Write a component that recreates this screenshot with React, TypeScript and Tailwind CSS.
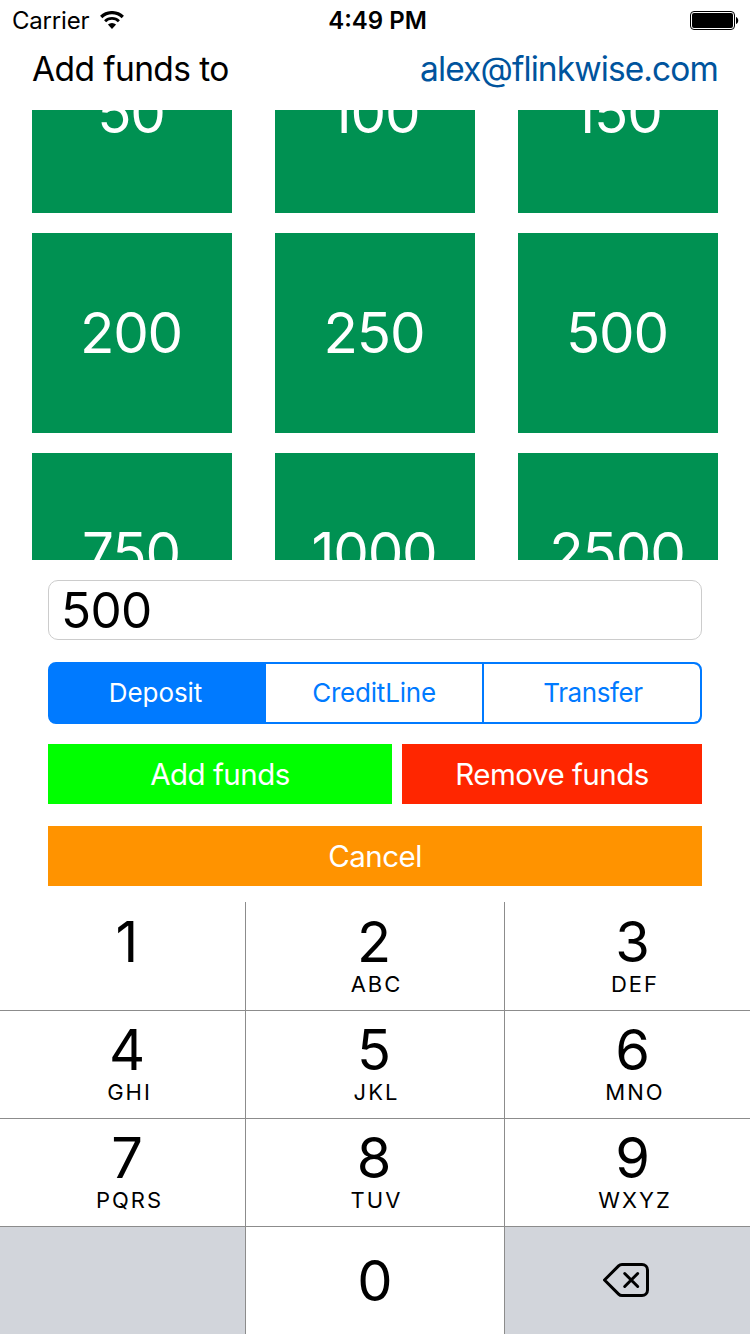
import React from "react";
import clsx from "clsx";

interface KeyProps {
  digit: string;
  letters?: string;
  className?: string;
}

const tileRows = [
  ["50", "100", "150"],
  ["200", "250", "500"],
  ["750", "1000", "2500"],
];

// Outer columns sit slightly right of center
const keys: KeyProps[] = [
  { digit: "1", className: "pt-[11px] pl-[11px]" },
  { digit: "2", letters: "ABC", className: "pt-[11px]" },
  { digit: "3", letters: "DEF", className: "pt-[11px] pl-[12px]" },
  { digit: "4", letters: "GHI", className: "pt-[10px] pl-[11px]" },
  { digit: "5", letters: "JKL", className: "pt-[10px]" },
  { digit: "6", letters: "MNO", className: "pt-[10px] pl-[12px]" },
  { digit: "7", letters: "PQRS", className: "pt-[10px] pl-[11px]" },
  { digit: "8", letters: "TUV", className: "pt-[10px]" },
  { digit: "9", letters: "WXYZ", className: "pt-[10px] pl-[12px]" },
];

// Single key of the number pad
const Key: React.FC<KeyProps> = ({ digit, letters, className }) => {
  return (
    <button className={clsx("bg-white flex flex-col items-center", className)}>
      <span className="text-[56px] leading-[58px] pr-[2px]">{digit}</span>
      {letters && (
        <span className="text-[22px] leading-[22px] mt-[2px] tracking-[2px] pl-[3px]">
          {letters}
        </span>
      )}
    </button>
  );
};

const StatusBar: React.FC = () => {
  return (
    <div className="h-10 grid grid-cols-3 items-center pl-3 pr-[11px] text-[24px] leading-none">
      <div className="flex items-center gap-[11px]">
        <span className="tracking-[-0.2px] pt-px">Carrier</span>
        <svg width="24" height="18" viewBox="0 0 24 18" fill="none">
          <path d="M1.2 6a15.4 15.4 0 0 1 21.6 0" stroke="black" strokeWidth="3.2" />
          <path d="M5.1 10.2a9.9 9.9 0 0 1 13.8 0" stroke="black" strokeWidth="2.9" />
          <path d="M12 18l-4.1-4.4a6 6 0 0 1 8.2 0z" fill="black" />
        </svg>
      </div>
      <span className="text-center font-semibold pl-[4px] pt-px">4:49 PM</span>
      <svg className="justify-self-end" width="49" height="19" viewBox="0 0 49 19">
        <rect x="0.5" y="0.5" width="44" height="18" rx="3.5" fill="none" stroke="black" />
        <rect x="2" y="2" width="41" height="15" rx="2" />
        <path d="M46 6c3 1 3 6 0 7z" />
      </svg>
    </div>
  );
};

export default function App() {
  return (
    <div className="w-[750px] h-[1334px] overflow-hidden bg-white text-black font-[Inter,sans-serif] flex flex-col">
      <StatusBar />

      {/* Header */}
      <header className="h-[70px] flex justify-between items-center pl-8 pr-8 pb-[10px] text-[33.5px] leading-none">
        <h1 className="tracking-[-0.6px]">Add funds to</h1>
        <span className="text-[#00549d] tracking-[-0.9px]">alex@flinkwise.com</span>
      </header>

      {/* Amount tiles, scrolled so the outer rows are cut off */}
      <div className="h-[450px] mx-8 overflow-hidden flex flex-col justify-center gap-5">
        {tileRows.map((row) => (
          <div key={row[0]} className="flex justify-between shrink-0 -translate-y-[2px]">
            {row.map((amount) => (
              <button
                key={amount}
                className="size-[200px] bg-[#009152] text-white text-[56.5px] leading-none tracking-[-1.2px] pr-[2px] pt-[1px] flex items-center justify-center"
              >
                {amount}
              </button>
            ))}
          </div>
        ))}
      </div>

      {/* Form */}
      <div className="mx-12 mt-5 flex flex-col">
        <div className="h-[60px] border border-[#cccccc] rounded-[10px] px-[12px] pt-[2px] flex items-center text-[49.5px] leading-none tracking-[-0.6px]">
          500
        </div>
        <div className="mt-[22px] h-[62px] flex border-2 border-[#007aff] bg-[#007aff] rounded-[8px] overflow-hidden text-[26px] text-[#007aff]">
          <button className="w-[216px] text-white pr-[5px] pb-px tracking-[-0.1px]">Deposit</button>
          <button className="w-[216px] bg-white pb-px tracking-[-0.2px]">CreditLine</button>
          <button className="flex-1 ml-[2px] bg-white rounded-r-[6px] pl-[2px] pb-px tracking-[-0.4px]">
            Transfer
          </button>
        </div>
        <div className="mt-5 h-[60px] flex gap-[10px] text-white text-[29.5px] tracking-[-0.5px]">
          <button className="w-[344px] bg-[#00ff00]">Add funds</button>
          <button className="flex-1 bg-[#ff2600]">Remove funds</button>
        </div>
        <button className="mt-[22px] h-[60px] bg-[#ff9300] text-white text-[29.5px] tracking-[-0.5px]">
          Cancel
        </button>
      </div>

      {/* Number pad */}
      <div className="mt-4 h-[432px] grid grid-cols-[245px_258px_245px] grid-rows-[108px_107px_107px_107px] gap-px bg-[#8c8c8c]">
        {keys.map((key) => (
          <Key key={key.digit} {...key} />
        ))}
        <div className="bg-[#d2d5db]" />
        <button className="bg-white text-[56px]">0</button>
        <button className="bg-[#d2d5db] flex items-center justify-center pr-[3px] pb-px">
          <svg
            width="46"
            height="34"
            viewBox="0 0 46 34"
            fill="none"
            stroke="black"
            strokeWidth="3"
            strokeLinecap="round"
            strokeLinejoin="round"
          >
            <path d="M19 1.5h20a5.5 5.5 0 0 1 5.5 5.5v20a5.5 5.5 0 0 1-5.5 5.5H19q-2 0-3.4-1.4L1.5 17L15.6 2.9Q17 1.5 19 1.5z" />
            <path d="M21.7 10.5l13 13M34.7 10.5l-13 13" />
          </svg>
        </button>
      </div>
    </div>
  );
}
